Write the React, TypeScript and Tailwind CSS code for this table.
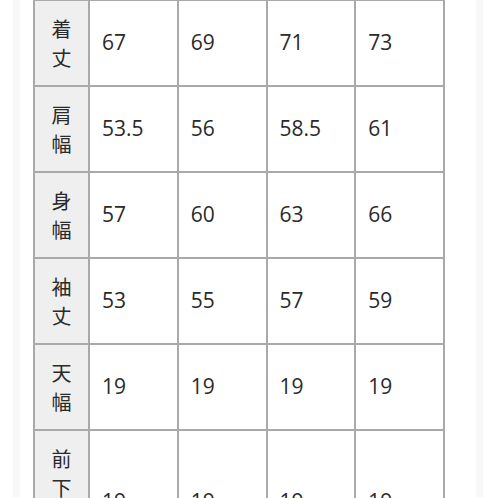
const rows: { label: string; values: string[] }[] = [
  { label: "着丈", values: ["67", "69", "71", "73"] },
  { label: "肩幅", values: ["53.5", "56", "58.5", "61"] },
  { label: "身幅", values: ["57", "60", "63", "66"] },
  { label: "袖丈", values: ["53", "55", "57", "59"] },
  { label: "天幅", values: ["19", "19", "19", "19"] },
  { label: "前下がり", values: ["19", "19", "19", "19"] },
];

export default function App() {
  return (
    <div className="h-[498px] w-[498px] overflow-hidden bg-white">
      <div className="ml-[13px] mr-[15px] h-full border-x-[7px] border-[#f8f8f8] bg-white">
        <table
          className="ml-[13px] -mt-[1px] w-[412px] table-fixed border-collapse border-2 border-[#a9a9a9] text-[#2a2a2a]"
          style={{ fontFamily: '"Open Sans", "Noto Sans CJK JP", sans-serif' }}
        >
          <colgroup>
            <col className="w-[55px]" />
            <col />
            <col />
            <col />
            <col />
          </colgroup>
          <tbody>
            {rows.map((row) => (
              <tr key={row.label}>
                <th className="h-[86px] border-2 border-[#a9a9a9] bg-[#efefef] px-0 py-[13px] text-center align-middle text-[20px] font-normal leading-[29px]">
                  {row.label.split("").map((ch, i) => (
                    <div key={i} style={{ fontFamily: '"Noto Sans CJK JP", sans-serif' }}>
                      {ch}
                    </div>
                  ))}
                </th>
                {row.values.map((v, i) => (
                  <td
                    key={i}
                    className="h-[86px] border-2 border-[#a9a9a9] pl-[12px] align-middle text-[21px]"
                  >
                    {v}
                  </td>
                ))}
              </tr>
            ))}
          </tbody>
        </table>
      </div>
    </div>
  );
}
